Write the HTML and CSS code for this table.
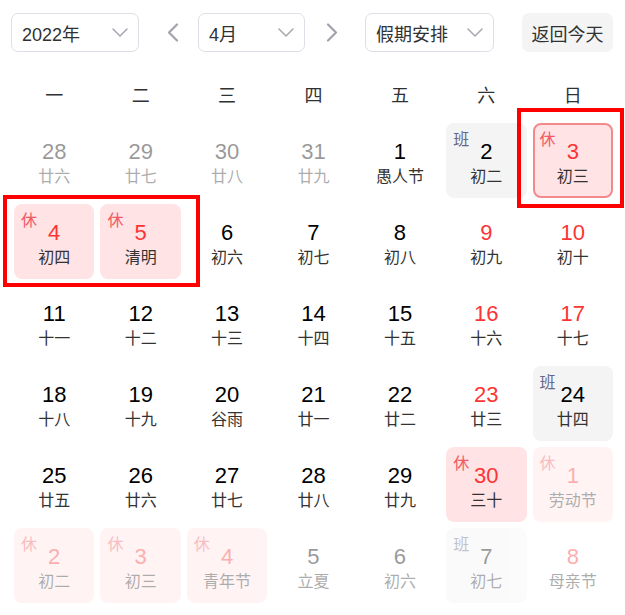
FILE: index.html
```html
<!DOCTYPE html>
<html lang="zh-CN">
<head>
<meta charset="utf-8">
<title>日历</title>
<link rel="stylesheet" href="styles.css">
</head>
<body>
<div class="cal">
  <div class="toolbar">
    <div class="select select-year"><span>2022年</span><svg class="chev" viewBox="0 0 16 9" width="16" height="9"><polyline points="1,1 8,8 15,1"/></svg></div>
    <div class="arrow arrow-prev"><svg viewBox="0 0 13 19" width="13" height="19"><polyline points="11,1.5 3,9.5 11,17.5"/></svg></div>
    <div class="select select-month"><span>4月</span><svg class="chev" viewBox="0 0 16 9" width="16" height="9"><polyline points="1,1 8,8 15,1"/></svg></div>
    <div class="arrow arrow-next"><svg viewBox="0 0 13 19" width="13" height="19"><polyline points="2,1.5 10,9.5 2,17.5"/></svg></div>
    <div class="select select-holiday"><span>假期安排</span><svg class="chev" viewBox="0 0 16 9" width="16" height="9"><polyline points="1,1 8,8 15,1"/></svg></div>
    <div class="today-btn">返回今天</div>
  </div>

  <div class="weekdays">
    <div>一</div><div>二</div><div>三</div><div>四</div><div>五</div><div>六</div><div>日</div>
  </div>

  <div class="days">
    <div class="cell other"><div class="box"><span class="num">28</span><span class="lunar">廿六</span></div></div>
    <div class="cell other"><div class="box"><span class="num">29</span><span class="lunar">廿七</span></div></div>
    <div class="cell other"><div class="box"><span class="num">30</span><span class="lunar">廿八</span></div></div>
    <div class="cell other"><div class="box"><span class="num">31</span><span class="lunar">廿九</span></div></div>
    <div class="cell"><div class="box"><span class="num">1</span><span class="lunar">愚人节</span></div></div>
    <div class="cell"><div class="box work"><span class="tag">班</span><span class="num">2</span><span class="lunar">初二</span></div></div>
    <div class="cell"><div class="box rest selected"><span class="tag">休</span><span class="num">3</span><span class="lunar">初三</span></div></div>

    <div class="cell"><div class="box rest"><span class="tag">休</span><span class="num">4</span><span class="lunar">初四</span></div></div>
    <div class="cell"><div class="box rest"><span class="tag">休</span><span class="num">5</span><span class="lunar">清明</span></div></div>
    <div class="cell"><div class="box"><span class="num">6</span><span class="lunar">初六</span></div></div>
    <div class="cell"><div class="box"><span class="num">7</span><span class="lunar">初七</span></div></div>
    <div class="cell"><div class="box"><span class="num">8</span><span class="lunar">初八</span></div></div>
    <div class="cell weekend"><div class="box"><span class="num">9</span><span class="lunar">初九</span></div></div>
    <div class="cell weekend"><div class="box"><span class="num">10</span><span class="lunar">初十</span></div></div>

    <div class="cell"><div class="box"><span class="num">11</span><span class="lunar">十一</span></div></div>
    <div class="cell"><div class="box"><span class="num">12</span><span class="lunar">十二</span></div></div>
    <div class="cell"><div class="box"><span class="num">13</span><span class="lunar">十三</span></div></div>
    <div class="cell"><div class="box"><span class="num">14</span><span class="lunar">十四</span></div></div>
    <div class="cell"><div class="box"><span class="num">15</span><span class="lunar">十五</span></div></div>
    <div class="cell weekend"><div class="box"><span class="num">16</span><span class="lunar">十六</span></div></div>
    <div class="cell weekend"><div class="box"><span class="num">17</span><span class="lunar">十七</span></div></div>

    <div class="cell"><div class="box"><span class="num">18</span><span class="lunar">十八</span></div></div>
    <div class="cell"><div class="box"><span class="num">19</span><span class="lunar">十九</span></div></div>
    <div class="cell"><div class="box"><span class="num">20</span><span class="lunar">谷雨</span></div></div>
    <div class="cell"><div class="box"><span class="num">21</span><span class="lunar">廿一</span></div></div>
    <div class="cell"><div class="box"><span class="num">22</span><span class="lunar">廿二</span></div></div>
    <div class="cell weekend"><div class="box"><span class="num">23</span><span class="lunar">廿三</span></div></div>
    <div class="cell"><div class="box work"><span class="tag">班</span><span class="num">24</span><span class="lunar">廿四</span></div></div>

    <div class="cell"><div class="box"><span class="num">25</span><span class="lunar">廿五</span></div></div>
    <div class="cell"><div class="box"><span class="num">26</span><span class="lunar">廿六</span></div></div>
    <div class="cell"><div class="box"><span class="num">27</span><span class="lunar">廿七</span></div></div>
    <div class="cell"><div class="box"><span class="num">28</span><span class="lunar">廿八</span></div></div>
    <div class="cell"><div class="box"><span class="num">29</span><span class="lunar">廿九</span></div></div>
    <div class="cell"><div class="box rest"><span class="tag">休</span><span class="num">30</span><span class="lunar">三十</span></div></div>
    <div class="cell other"><div class="box rest"><span class="tag">休</span><span class="num">1</span><span class="lunar">劳动节</span></div></div>

    <div class="cell other"><div class="box rest"><span class="tag">休</span><span class="num">2</span><span class="lunar">初二</span></div></div>
    <div class="cell other"><div class="box rest"><span class="tag">休</span><span class="num">3</span><span class="lunar">初三</span></div></div>
    <div class="cell other"><div class="box rest"><span class="tag">休</span><span class="num">4</span><span class="lunar">青年节</span></div></div>
    <div class="cell other"><div class="box"><span class="num">5</span><span class="lunar">立夏</span></div></div>
    <div class="cell other"><div class="box"><span class="num">6</span><span class="lunar">初六</span></div></div>
    <div class="cell other"><div class="box work"><span class="tag">班</span><span class="num">7</span><span class="lunar">初七</span></div></div>
    <div class="cell other weekend"><div class="box"><span class="num">8</span><span class="lunar">母亲节</span></div></div>
  </div>

  <div class="mark mark-sun"></div>
  <div class="mark mark-qm"></div>
</div>
</body>
</html>
```

FILE: styles.css
```css
* { box-sizing: border-box; }

html, body {
  margin: 0;
  padding: 0;
  background: #fff;
}

body {
  font-family: "Liberation Sans", "Noto Sans CJK SC", sans-serif;
  color: #303133;
}

.cal {
  position: relative;
  width: 625px;
  height: 615px;
  overflow: hidden;
}

/* ---------- toolbar ---------- */
.toolbar {
  display: flex;
  align-items: center;
  padding: 13px 0 0 11px;
  height: 52px;
}

.select {
  height: 39px;
  border: 1px solid #dcdfe6;
  border-radius: 7px;
  display: flex;
  align-items: center;
  justify-content: space-between;
  padding: 0 10px 0 10px;
  font-size: 18px;
  color: #303133;
}

.select-year { width: 128px; }
.select-month { width: 107px; }
.select-holiday { width: 129px; }

.chev {
  display: block;
  fill: none;
  stroke: #a8abb2;
  stroke-width: 1.6;
  stroke-linecap: round;
  stroke-linejoin: round;
}

.arrow svg {
  display: block;
  fill: none;
  stroke: #a0a3ab;
  stroke-width: 2.2;
  stroke-linecap: round;
  stroke-linejoin: round;
}

.arrow-prev { margin: 0 19px 0 27px; }
.arrow-next { margin: 0 26px 0 21px; }

.today-btn {
  margin-left: 28px;
  height: 39px;
  width: 91px;
  border-radius: 7px;
  background: #f4f4f5;
  display: flex;
  align-items: center;
  justify-content: center;
  font-size: 18px;
  color: #303133;
}

/* ---------- weekdays ---------- */
.weekdays {
  display: grid;
  grid-template-columns: repeat(7, 1fr);
  width: 605px;
  margin: 20px 0 0 11px;
  height: 48px;
  line-height: 48px;
  text-align: center;
  font-size: 18px;
  color: #303133;
}

/* ---------- days ---------- */
.days {
  display: grid;
  grid-template-columns: repeat(7, 1fr);
  grid-auto-rows: 81px;
  width: 605px;
  margin-left: 11px;
}

.cell {
  padding: 3px;
}

.box {
  position: relative;
  height: 75px;
  border-radius: 8px;
  display: flex;
  flex-direction: column;
  align-items: center;
  padding-top: 18px;
}

.num {
  font-size: 22px;
  line-height: 22px;
  color: #000;
}

.lunar {
  margin-top: 4px;
  font-size: 16px;
  line-height: 20px;
  color: #333;
}

.tag {
  position: absolute;
  left: 7px;
  top: 8px;
  font-size: 16px;
  line-height: 18px;
}

.weekend .num { color: #fb3535; }

.rest { background: #ffe3e5; }
.rest .num { color: #fb3535; }
.rest .tag { color: #f25a66; }

.work { background: #f4f4f4; }
.work .num { color: #000; }
.work .tag { color: #66678a; }

.selected {
  border: 2px solid #f28a8c;
  padding-top: 16px;
}
.selected .tag { left: 5px; top: 6px; }

.other { opacity: 0.4; }

/* ---------- annotation marks ---------- */
.mark {
  position: absolute;
  border: 4px solid #ff0000;
}
.mark-sun {
  left: 517px;
  top: 108px;
  width: 107px;
  height: 100px;
}
.mark-qm {
  left: 3px;
  top: 195px;
  width: 197px;
  height: 92px;
}
```
